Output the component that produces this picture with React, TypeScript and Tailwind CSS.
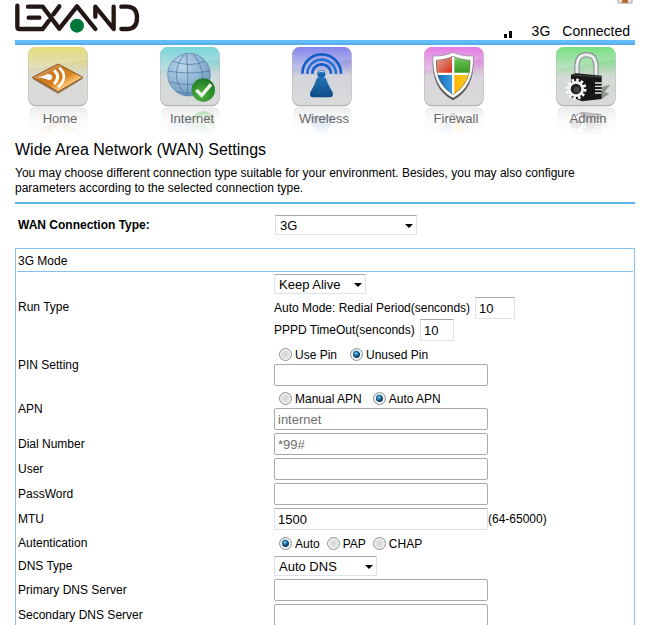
import { useState } from "react";
import type { ReactNode } from "react";

function Logo() {
  return (
    <svg viewBox="45 9 378 90" className="block h-[30px] w-[126px]" role="img" aria-label="LEXAND">
      <g fill="none" stroke="#231815" strokeWidth="13" strokeLinecap="round" strokeLinejoin="round">
        <path d="M52 17V80Q52 87 59 87H128L147 62" />
        <path d="M84 20H128L178 86L231 19L286 87M286 50V20L341 87V20" />
        <path d="M364 20H384Q411 22 411 53Q411 85 384 87H364" />
        <path d="M86 53H118" />
        <path d="M178 19L160 43" />
      </g>
      <circle cx="231" cy="77" r="21" fill="#00773a" />
    </svg>
  );
}

function HomeIcon() {
  return (
    <g>
      <path d="M13 95L90 53L165 95L90 141Z" fill="#6f4a22" opacity=".6" />
      <path d="M13 91L90 51L165 91L90 134Z" fill="url(#amber)" stroke="#8a5420" strokeWidth="3" />
      <path d="M28 91Q52 86 56 82Q66 78 72 86Q76 96 62 100Q54 94 28 91Z" fill="#fff" />
      <path d="M78 70Q100 88 78 111" fill="none" stroke="#fff" strokeWidth="9" />
      <path d="M94 62Q124 90 90 121" fill="none" stroke="#fff" strokeWidth="8" />
    </g>
  );
}

function GlobeIcon() {
  return (
    <g>
      <circle cx="87" cy="83" r="64" fill="url(#globe)" stroke="#5b86ad" strokeWidth="2" />
      <g fill="none" stroke="#416f9b" strokeWidth="2">
        <path d="M75 20Q22 83 78 146M80 19Q86 83 82 147M100 20Q145 75 118 139" />
        <path d="M38 43Q92 62 136 43M24 72Q88 84 150 72M27 105Q88 120 145 105M48 133Q87 144 126 133" />
      </g>
      <circle cx="130" cy="129" r="35" fill="url(#green)" />
      <path d="M109 129L125 145L153 112" fill="none" stroke="#f1f5ee" strokeWidth="10" />
    </g>
  );
}

function AntennaIcon() {
  return (
    <g>
      <g fill="none" stroke="#155fc6" strokeWidth="8">
        <path d="M31 80A58 58 0 0 1 147 80" />
        <path d="M46 81A43 43 0 0 1 132 81" stroke="#2474d6" />
        <path d="M61 80A28 28 0 0 1 117 80" />
      </g>
      <circle cx="88" cy="82" r="12" fill="#1667ad" />
      <path d="M81 76Q88 70 95 76" stroke="#b9d7f1" strokeWidth="4" fill="none" />
      <path d="M75 92H101Q108 114 122 136Q127 151 112 151H64Q50 151 55 136Q68 114 75 92Z" fill="url(#antenna)" />
    </g>
  );
}

function ShieldIcon() {
  const inner = "M37 40Q64 39 87 28Q111 39 138 40Q143 109 87 143Q32 109 37 40Z";
  return (
    <g>
      <path d="M27 31Q63 31 87 18Q112 31 148 31Q154 126 87 160Q20 126 27 31Z" fill="#555" />
      <path d="M27 27Q63 28 87 16Q112 28 148 27Q152 118 87 153Q22 118 27 27Z" fill="#fff" stroke="#888" strokeWidth="2" />
      <clipPath id="shieldClip">
        <path d={inner} />
      </clipPath>
      <g clipPath="url(#shieldClip)">
        <path d="M30 20H84V77H30Z" fill="url(#red)" />
        <path d="M91 20H146V77H91Z" fill="url(#leaf)" />
        <path d="M30 84H84V150H30Z" fill="url(#blue)" />
        <path d="M91 84H146V150H91Z" fill="url(#gold)" />
      </g>
      <path d={inner} fill="none" stroke="#444" strokeWidth="1.5" />
    </g>
  );
}

function LockIcon() {
  return (
    <g>
      <path d="M136 120L163 113L146 135L160 140L136 156Z" fill="#6d786c" opacity=".7" />
      <path d="M63 88V52Q66 23 91 23Q117 23 120 52V88" fill="none" stroke="#8d9296" strokeWidth="16" />
      <path d="M63 88V52Q66 23 91 23Q117 23 120 52V88" fill="none" stroke="#eceef0" strokeWidth="9" />
      <path d="M45 83L60 79L137 86V156L78 163L45 150Z" fill="#171717" />
      <path d="M48 84L136 90" stroke="#4c4c4c" strokeWidth="3" />
      <path d="M117 108H137M117 118H138M117 128H138M117 138H136" stroke="#e6e6e6" strokeWidth="4" />
      <circle cx="60" cy="126" r="27" fill="none" stroke="#f4f4f4" strokeWidth="9" strokeDasharray="8 6.1" />
      <circle cx="60" cy="126" r="20" fill="#222" stroke="#f4f4f4" strokeWidth="8" />
      <circle cx="62" cy="128" r="9" fill="#444" />
    </g>
  );
}

const navItems: { name: string; tint: string; art: ReactNode }[] = [
  { name: "Home", tint: "#dfd25a", art: <HomeIcon /> },
  { name: "Internet", tint: "#55cbd2", art: <GlobeIcon /> },
  { name: "Wireless", tint: "#6868ea", art: <AntennaIcon /> },
  { name: "Firewall", tint: "#e05ce0", art: <ShieldIcon /> },
  { name: "Admin", tint: "#55da62", art: <LockIcon /> },
];

function SharedPaints() {
  return (
    <svg className="absolute h-0 w-0" aria-hidden="true">
      <defs>
        <linearGradient id="amber" x1="0" y1="0" x2="1" y2="1">
          <stop offset="0" stopColor="#fff0bd" />
          <stop offset=".35" stopColor="#c77a25" />
          <stop offset=".55" stopColor="#d9801c" />
          <stop offset=".75" stopColor="#ffcf80" />
          <stop offset="1" stopColor="#a85a12" />
        </linearGradient>
        <radialGradient id="globe" cx=".35" cy=".3" r=".75">
          <stop offset="0" stopColor="#bcd6ec" />
          <stop offset=".6" stopColor="#8fb3d2" />
          <stop offset="1" stopColor="#6b93b9" />
        </radialGradient>
        <radialGradient id="green" cx=".4" cy=".7" r=".7">
          <stop offset="0" stopColor="#4fb53c" />
          <stop offset="1" stopColor="#1d7a26" />
        </radialGradient>
        <linearGradient id="antenna" x1="0" y1="0" x2="0" y2="1">
          <stop offset="0" stopColor="#2272b4" />
          <stop offset="1" stopColor="#0f4a86" />
        </linearGradient>
        <linearGradient id="red" x1="0" y1="0" x2="1" y2="1">
          <stop offset="0" stopColor="#e8b0a5" />
          <stop offset=".6" stopColor="#dc6a58" />
          <stop offset="1" stopColor="#d92a12" />
        </linearGradient>
        <linearGradient id="leaf" x1="0" y1="0" x2="0" y2="1">
          <stop offset="0" stopColor="#a5d698" />
          <stop offset=".5" stopColor="#57b53f" />
          <stop offset="1" stopColor="#3a9a22" />
        </linearGradient>
        <linearGradient id="blue" x1="0" y1="0" x2="1" y2="0">
          <stop offset="0" stopColor="#0c5da8" />
          <stop offset="1" stopColor="#3b9be2" />
        </linearGradient>
        <linearGradient id="gold" x1="0" y1="0" x2="1" y2="0">
          <stop offset="0" stopColor="#ffb400" />
          <stop offset="1" stopColor="#ffd23c" />
        </linearGradient>
        <linearGradient id="mirror" x1="0" y1="0" x2="0" y2="1">
          <stop offset="0" stopColor="#d0d2d2" />
          <stop offset="1" stopColor="#f4f4f4" />
        </linearGradient>
        <linearGradient id="veil" x1="0" y1="0" x2="0" y2="1">
          <stop offset="0" stopColor="#fff" stopOpacity=".5" />
          <stop offset=".35" stopColor="#fff" stopOpacity=".8" />
          <stop offset="1" stopColor="#fff" />
        </linearGradient>
      </defs>
    </svg>
  );
}

function NavTile({ name, tint, art }: { name: string; tint: string; art: ReactNode }) {
  return (
    <a href="#" className="relative block w-[60px] text-[13px] leading-4 text-[#666]">
      <svg viewBox="0 0 180 264" className="block h-[88px] w-[60px]" aria-hidden="true">
        <defs>
          <linearGradient id={"tint" + name} x1="0" y1="0" x2="0" y2="1">
            <stop offset="0" stopColor={tint} />
            <stop offset=".3" stopColor={tint} stopOpacity=".45" />
            <stop offset=".5" stopColor={tint} stopOpacity=".05" />
            <stop offset="1" stopColor={tint} stopOpacity="0" />
          </linearGradient>
        </defs>
        <path d="M3 264V200Q3 180 24 180H156Q179 180 179 200V264Z" fill="url(#mirror)" />
        <g transform="matrix(1 0 0 -1 0 357)">{art}</g>
        <rect x="0" y="180" width="180" height="84" fill="url(#veil)" />
        <rect x="0" y="0" width="179" height="178" rx="24" fill="#a5a5a5" />
        <rect x="1" y="0" width="177" height="175" rx="23" fill="#d9dada" />
        <rect x="1" y="0" width="177" height="175" rx="23" fill={"url(#tint" + name + ")"} />
        <path d="M1 68Q90 54 178 36V23Q178 0 155 0H24Q1 0 1 23Z" fill="#fff" opacity=".2" />
        {art}
      </svg>
      <span className="absolute inset-x-0 top-16 pl-1 text-center">{name}</span>
    </a>
  );
}

function Dropdown({ id, options, width }: { id: string; options: string[]; width: string }) {
  return (
    <span className={"relative block " + width}>
      <select
        id={id}
        className="block h-5 w-full appearance-none border border-[#dde2e8] border-t-[#a8a9ad] bg-white pt-px pl-1 text-[13px] leading-4 text-black"
      >
        {options.map((o) => (
          <option key={o}>{o}</option>
        ))}
      </select>
      <svg viewBox="0 0 8 4" className="pointer-events-none absolute top-[9px] right-1 h-1 w-2" aria-hidden="true">
        <path d="M0 0H8L4 4Z" fill="#000" />
      </svg>
    </span>
  );
}

const solidBox = "rounded-[2px] border-[#aaa]";
const lightBox = "border-[#dde2e8] border-t-[#a8a9ad]";

function TextBox({ id, value = "", width = "w-[214px]", look = solidBox, type = "text", muted = false }: {
  id: string; value?: string; width?: string; look?: string; type?: string; muted?: boolean;
}) {
  return (
    <input
      id={id}
      type={type}
      defaultValue={value}
      className={
        "block h-[22px] border bg-white px-[3px] text-[13px] " + width + " " + look + (muted ? " text-[#6f6f6f]" : " text-black")
      }
    />
  );
}

function Radios({ group, options, initial, gap }: {
  group: string; options: string[]; initial: string; gap: string;
}) {
  const [picked, setPicked] = useState(initial);
  return (
    <div className={"flex h-5 items-start pt-1 pl-[5px] " + gap}>
      {options.map((o) => (
        <label key={o} className="flex items-start gap-[3px]">
          <input
            type="radio"
            name={group}
            checked={picked === o}
            onChange={() => setPicked(o)}
            className="h-[13px] w-[13px] appearance-none rounded-full border border-[#8e9193] bg-radial from-[#d3d5d7] to-[#f1f2f3] shadow-[inset_0_0_0_1px_#f6f6f6] checked:bg-[radial-gradient(circle_at_45%_40%,#8fd0ee_0%,#2a7fb0_20%,transparent_40%),radial-gradient(circle_at_50%_50%,#0d3552_0px,#123f60_3px,#eef1f3_4px)] checked:shadow-none"
          />
          <span>{o}</span>
        </label>
      ))}
    </div>
  );
}

function Row({ label, htmlFor, pad = "pt-px pb-0.5", children }: {
  label: string; htmlFor?: string; pad?: string; children: ReactNode;
}) {
  return (
    <tr>
      <th scope="row" className="w-[257px] p-0 pl-px text-left align-middle font-normal">
        {htmlFor ? <label htmlFor={htmlFor}>{label}</label> : label}
      </th>
      <td className={"px-0 align-middle " + pad}>{children}</td>
    </tr>
  );
}

export default function App() {
  return (
    <div className="overflow-hidden bg-white pr-[13px] pl-[15px] font-['Liberation_Sans',Arial,sans-serif] text-xs leading-[15px] text-black">
      <SharedPaints />
      <header className="flex h-10 items-start justify-between">
        <div className="pt-[3px]">
          <Logo />
        </div>
        <div className="flex flex-col items-end">
          <svg viewBox="0 0 16 4" className="mr-0.5 block h-1 w-4" aria-hidden="true">
            <path d="M0 0H16V2Q16 4 14 4H2Q0 4 0 2Z" fill="#c9c5cc" />
            <path d="M2 0H14V2H2Z" fill="#eee4dc" />
            <path d="M5 0H11V3H5Z" fill="#b86f35" />
          </svg>
          <div className="mt-[19px] flex items-center pr-[5px] text-sm leading-4">
            <svg viewBox="0 0 8 7" className="mt-1.5 mr-5 h-[7px] w-2" role="img" aria-label="Signal strength">
              <path d="M0 3H3V7H0ZM5 0H8V7H5Z" fill="#000" />
            </svg>
            <span className="mr-3">3G</span>
            <span>Connected</span>
          </div>
        </div>
      </header>
      <div className="h-[5px] border-b-2 border-[#59aee9] bg-[#63bdfa]" />
      <nav className="flex justify-between pt-0.5 pr-[19px] pl-[13px]">
        {navItems.map((item) => (
          <NavTile key={item.name} {...item} />
        ))}
      </nav>

      <main>
        <h1 className="pt-[5px] text-base leading-5">Wide Area Network (WAN) Settings</h1>
        <p className="border-b-2 border-[#5fb4ec] pt-1.5 pb-1.5">
          You may choose different connection type suitable for your environment. Besides, you may also configure
          parameters according to the selected connection type.
        </p>

        <div className="flex items-center pt-[11px] pb-[13px]">
          <label htmlFor="wanType" className="w-[260px] pl-[3px] font-bold">
            WAN Connection Type:
          </label>
          <Dropdown id="wanType" options={["3G"]} width="w-[142px]" />
        </div>

        <section className="border border-[#85c1e8] p-px">
          <h2 className="border-b border-[#85c1e8] pt-1 pb-[2px] pl-px">3G Mode</h2>
          <table className="w-full border-collapse">
            <tbody>
              <Row label="Run Type" htmlFor="runType" pad="pt-0.5 pb-0.5">
                <div className="pb-[3px]">
                  <Dropdown id="runType" options={["Keep Alive"]} width="w-[92px]" />
                </div>
                <div className="flex items-center">
                  <label htmlFor="redial" className="w-[201px] pt-px">Auto Mode: Redial Period(senconds)</label>
                  <TextBox id="redial" value="10" width="w-10" look={lightBox} />
                </div>
                <div className="flex items-center">
                  <label htmlFor="pppd" className="w-[146px] pt-px">PPPD TimeOut(senconds)</label>
                  <TextBox id="pppd" value="10" width="w-[34px]" look={lightBox} />
                </div>
              </Row>
              <Row label="PIN Setting" htmlFor="pin" pad="pt-px pb-px">
                <Radios group="pinMode" options={["Use Pin", "Unused Pin"]} initial="Unused Pin" gap="gap-[13px]" />
                <TextBox id="pin" />
              </Row>
              <Row label="APN" htmlFor="apn">
                <Radios group="apnMode" options={["Manual APN", "Auto APN"]} initial="Auto APN" gap="gap-[11px]" />
                <TextBox id="apn" value="internet" muted />
              </Row>
              <Row label="Dial Number" htmlFor="dial">
                <TextBox id="dial" value="*99#" muted />
              </Row>
              <Row label="User" htmlFor="user">
                <TextBox id="user" />
              </Row>
              <Row label="PassWord" htmlFor="password">
                <TextBox id="password" type="password" />
              </Row>
              <Row label="MTU" htmlFor="mtu">
                <div className="flex items-center">
                  <TextBox id="mtu" value="1500" look={lightBox} />
                  <span className="pt-px">(64-65000)</span>
                </div>
              </Row>
              <Row label="Autentication">
                <Radios group="auth" options={["Auto", "PAP", "CHAP"]} initial="Auto" gap="gap-[7px]" />
              </Row>
              <Row label="DNS Type" htmlFor="dnsType">
                <Dropdown id="dnsType" options={["Auto DNS"]} width="w-[103px]" />
              </Row>
              <Row label="Primary DNS Server" htmlFor="dns1">
                <TextBox id="dns1" />
              </Row>
              <Row label="Secondary DNS Server" htmlFor="dns2">
                <TextBox id="dns2" />
              </Row>
            </tbody>
          </table>
        </section>
      </main>
    </div>
  );
}
